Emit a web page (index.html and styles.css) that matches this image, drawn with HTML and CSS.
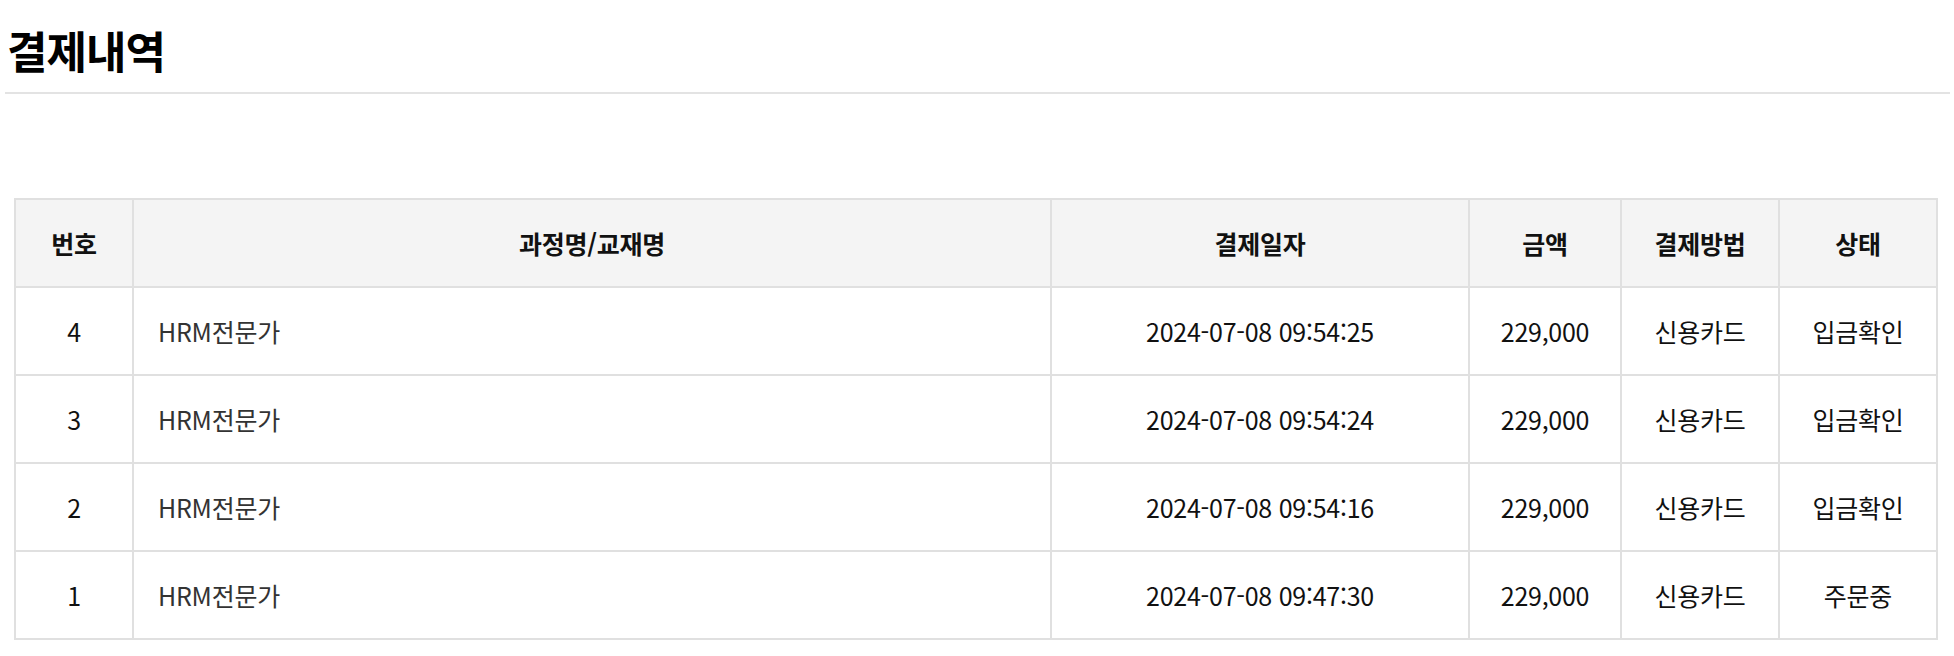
FILE: index.html
```html
<!DOCTYPE html>
<html lang="ko">
<head>
<meta charset="utf-8">
<title>결제내역</title>
<link rel="stylesheet" href="styles.css">
</head>
<body>
<div class="page">
  <div class="title-bar">
    <h2 class="title">결제내역</h2>
  </div>
  <div class="table-wrap">
    <table class="pay-table">
      <colgroup>
        <col class="c-no">
        <col class="c-name">
        <col class="c-date">
        <col class="c-amount">
        <col class="c-method">
        <col class="c-status">
      </colgroup>
      <thead>
        <tr>
          <th>번호</th>
          <th>과정명/교재명</th>
          <th>결제일자</th>
          <th>금액</th>
          <th>결제방법</th>
          <th>상태</th>
        </tr>
      </thead>
      <tbody>
        <tr>
          <td>4</td>
          <td class="name">HRM전문가</td>
          <td>2024-07-08 09:54:25</td>
          <td>229,000</td>
          <td>신용카드</td>
          <td>입금확인</td>
        </tr>
        <tr>
          <td>3</td>
          <td class="name">HRM전문가</td>
          <td>2024-07-08 09:54:24</td>
          <td>229,000</td>
          <td>신용카드</td>
          <td>입금확인</td>
        </tr>
        <tr>
          <td>2</td>
          <td class="name">HRM전문가</td>
          <td>2024-07-08 09:54:16</td>
          <td>229,000</td>
          <td>신용카드</td>
          <td>입금확인</td>
        </tr>
        <tr>
          <td>1</td>
          <td class="name">HRM전문가</td>
          <td>2024-07-08 09:47:30</td>
          <td>229,000</td>
          <td>신용카드</td>
          <td>주문중</td>
        </tr>
      </tbody>
    </table>
  </div>
</div>
</body>
</html>
```

FILE: styles.css
```css
* { box-sizing: border-box; }

body {
  margin: 0;
  background: #fff;
  color: #111;
  font-family: "Noto Sans CJK KR", "Noto Sans", sans-serif;
}

.page {
  padding: 0 4px 0 5px;
}

.title-bar {
  padding: 20px 0 12px 2px;
  border-bottom: 2px solid #e3e3e3;
}

.title {
  margin: 0;
  font-size: 44px;
  line-height: 60px;
  font-weight: 700;
  letter-spacing: -1px;
  color: #000;
}

.table-wrap {
  margin: 104px 14px 0 9px;
}

.pay-table {
  width: 1924px;
  border-collapse: collapse;
  table-layout: fixed;
  font-size: 25px;
  letter-spacing: -0.25px;
}

.c-no { width: 118px; }
.c-name { width: 918px; }
.c-date { width: 418px; }
.c-amount { width: 152px; }
.c-method { width: 158px; }
.c-status { width: 158px; }

.pay-table th,
.pay-table td {
  border: 2px solid #e0e0e0;
  height: 88px;
  padding: 0;
  text-align: center;
  vertical-align: middle;
  line-height: 30px;
}

.pay-table th {
  background: #f4f4f4;
  font-weight: 700;
  color: #111;
}

.pay-table td {
  font-weight: 400;
  color: #111;
}

.pay-table td.name {
  text-align: left;
  padding-left: 24px;
  color: #333;
}
```
